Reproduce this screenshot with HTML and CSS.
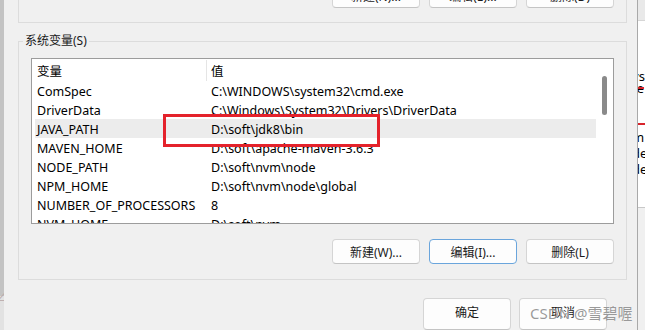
FILE: index.html
```html
<!DOCTYPE html>
<html lang="zh-CN">
<head>
    <meta charset="UTF-8">
    <meta name="viewport" content="width=device-width, initial-scale=1.0">
    <title>环境变量</title>
    <link rel="stylesheet" href="styles.css">
</head>
<body>
    <div class="edge-left">
        <span class="edge-mark">⊿</span>
    </div>

    <div class="dialog">
        <!-- 用户变量（上半部分被裁掉） -->
        <div class="user-group">
            <div class="btn-row">
                <button class="btn">新建(N)...</button>
                <button class="btn">编辑(E)...</button>
                <button class="btn">删除(D)</button>
            </div>
        </div>

        <!-- 系统变量 -->
        <fieldset class="sys-group">
            <legend>系统变量(S)</legend>
            <div class="listbox">
                <div class="list-body">
                    <div class="list-head">
                        <div class="cell name">变量</div>
                        <div class="cell value">值</div>
                    </div>
                    <div class="row"><div class="cell name">ComSpec</div><div class="cell value">C:\WINDOWS\system32\cmd.exe</div></div>
                    <div class="row"><div class="cell name">DriverData</div><div class="cell value">C:\Windows\System32\Drivers\DriverData</div></div>
                    <div class="row selected"><div class="cell name">JAVA_PATH</div><div class="cell value">D:\soft\jdk8\bin</div></div>
                    <div class="row"><div class="cell name">MAVEN_HOME</div><div class="cell value">D:\soft\apache-maven-3.6.3</div></div>
                    <div class="row"><div class="cell name">NODE_PATH</div><div class="cell value">D:\soft\nvm\node</div></div>
                    <div class="row"><div class="cell name">NPM_HOME</div><div class="cell value">D:\soft\nvm\node\global</div></div>
                    <div class="row"><div class="cell name">NUMBER_OF_PROCESSORS</div><div class="cell value">8</div></div>
                    <div class="row"><div class="cell name">NVM_HOME</div><div class="cell value">D:\soft\nvm</div></div>
                    <div class="mark"></div>
                </div>
                <div class="scrollbar">
                    <div class="thumb"></div>
                </div>
            </div>
            <div class="btn-row">
                <button class="btn">新建(W)...</button>
                <button class="btn focus">编辑(I)...</button>
                <button class="btn">删除(L)</button>
            </div>
        </fieldset>

        <div class="footer">
            <button class="btn">确定</button>
            <button class="btn">取消</button>
        </div>
    </div>

    <!-- 后面的窗口 -->
    <div class="backdrop">
        <div class="backdrop-top"></div>
        <div class="backdrop-panel">
            <div class="frag tight">ys</div>
            <div class="frag tight struck">te</div>
            <div class="red-line"></div>
            <div class="frag">m</div>
            <div class="frag">de</div>
            <div class="frag">de</div>
        </div>
    </div>

    <div class="watermark">CSDN @雪碧喔</div>
</body>
</html>
```

FILE: styles.css
```css
body {
    margin: 0;
    padding: 0;
    height: 330px;
    overflow: hidden;
    display: flex;
    position: relative;
    background: #f0f0f0;
    font-family: "Noto Sans", "Noto Sans CJK SC", sans-serif;
    font-size: 12.5px;
    color: #000000;
}
.edge-left {
    width: 4px;
    flex-shrink: 0;
    background: linear-gradient(to bottom, #c3c3c3 0 296px, #e2e2e2 296px);
    overflow: hidden;
    position: relative;
}
.edge-mark {
    position: absolute;
    top: 288px;
    left: -4px;
    font-size: 11px;
    color: #b9a7a7;
}
.dialog {
    width: 633px;
    flex-shrink: 0;
    border-right: 1px solid #a9a9a9;
    background: #f0f0f0;
    display: flex;
    flex-direction: column;
}
.btn {
    width: 88px;
    height: 25px;
    padding: 0;
    background: #fdfdfd;
    border: 1px solid #d5d5d5;
    border-bottom-color: #c4c4c4;
    border-radius: 4px;
    font-family: "Noto Sans", "Noto Sans CJK SC", sans-serif;
    font-size: 12px;
    color: #1a1a1a;
}
.btn.focus {
    border-color: #6aa5dc;
}
.btn-row {
    display: flex;
    justify-content: flex-end;
    gap: 9px;
}
/* 上面的用户变量组 */
.user-group {
    margin: 0 10px 0 14px;
    height: 24px;
    border: 1px solid #dcdcdc;
    border-top: none;
}
.user-group .btn-row {
    margin-top: -17px;
    padding-right: 12px;
}
/* 系统变量组 */
.sys-group {
    margin: 10px 10px 0 14px;
    padding: 0 12px 15px 12px;
    border: 1px solid #dcdcdc;
    border-radius: 0;
    min-inline-size: 0;
}
.sys-group legend {
    padding: 0 2px;
    margin-left: -8px;
    line-height: 16px;
    font-size: 12px;
    color: #1a1a1a;
}
.listbox {
    margin-top: 9px;
    height: 164px;
    border: 1px solid #9c9c9c;
    background: #ffffff;
    display: flex;
    overflow: hidden;
}
.list-body {
    flex: 1;
    overflow: hidden;
}
.list-head {
    height: 22px;
    display: flex;
    align-items: center;
    margin-left: 3px;
}
.list-head .value {
    border-left: 1px solid #e5e5e5;
    height: 20px;
    display: flex;
    align-items: center;
}
.row {
    height: 19px;
    display: flex;
    align-items: center;
    margin-left: 3px;
}
.row .cell {
    padding-top: 2px;
}
.row.selected {
    background: #ececec;
}
.cell.name {
    width: 169px;
    padding-left: 2px;
    white-space: nowrap;
}
.cell.value {
    padding-left: 5px;
    white-space: nowrap;
}
.list-head .cell {
    padding-top: 1px;
}
.list-head .cell.value {
    padding-left: 4px;
}
.scrollbar {
    width: 17px;
    flex-shrink: 0;
    padding-top: 17px;
}
.thumb {
    width: 5px;
    height: 39px;
    margin-left: 6px;
    border-radius: 3px;
    background: #8a8a8a;
}
.sys-group .btn-row {
    margin-top: 15px;
}
/* 红框标注 */
.mark {
    position: absolute;
    left: 163px;
    top: 114px;
    width: 211px;
    height: 27px;
    border: 3px solid #e4222b;
}
.footer {
    display: flex;
    justify-content: flex-end;
    gap: 8px;
    margin-top: 18px;
    padding-right: 30px;
}
.footer .btn {
    height: 32px;
    padding-bottom: 5px;
}
/* 背景里的另一个窗口 */
.backdrop {
    flex: 1;
    overflow: hidden;
    display: flex;
    flex-direction: column;
    background: #f0f0f0;
}
.backdrop-top {
    height: 20px;
    background: #e9e9e9;
    border-bottom: 1px solid #d6d6d6;
}
.backdrop-panel {
    height: 187px;
    background: #ffffff;
    border-bottom: 1px solid #c8c8c8;
    padding-top: 49px;
    box-sizing: border-box;
}
.frag {
    height: 16px;
    line-height: 16px;
    margin-left: -6px;
    white-space: nowrap;
    font-size: 13px;
}
.frag.tight {
    height: 12px;
    line-height: 12px;
}
.frag.struck {
    text-decoration: line-through 2px #d8242c;
    margin-bottom: 29px;
}
.red-line {
    height: 2px;
    background: #d8242c;
    margin-bottom: 4px;
}
.watermark {
    position: absolute;
    left: 530px;
    top: 303px;
    font-size: 15px;
    line-height: 20px;
    color: rgba(120, 120, 120, 0.75);
    text-shadow: 0 0 1px #ffffff;
    white-space: nowrap;
    font-family: "Noto Sans", "Noto Sans CJK SC", sans-serif;
}
```
